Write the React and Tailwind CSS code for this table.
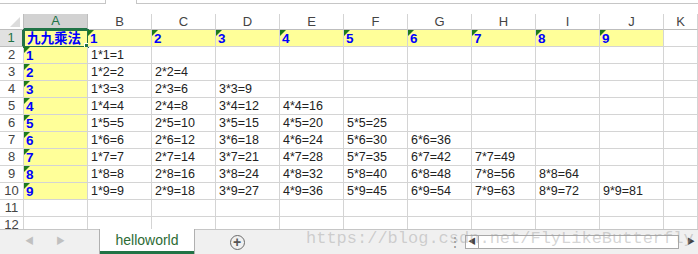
import React from "react";

const cols = ["A", "B", "C", "D", "E", "F", "G", "H", "I", "J", "K"];
const gridCols = "grid grid-cols-[24px_repeat(10,64px)_1fr]";

function Flag() {
  return (
    <span className="absolute left-0 top-0 w-0 h-0 border-t-[6px] border-r-[6px] border-t-[#1d7a1d] border-r-transparent" />
  );
}

function NumCell({ n, yellow = true }) {
  return (
    <div
      className={`relative h-[17px] border-r border-b border-[#d4d4d4] pl-[2px] flex items-end ${
        yellow ? "bg-[#ffff99]" : "bg-white"
      }`}
    >
      <Flag />
      <span className="text-[13.5px] leading-[15px] font-bold text-[#0000ff]">{n}</span>
    </div>
  );
}

function Cell({ text }) {
  return (
    <div className="h-[17px] border-r border-b border-[#d4d4d4] pl-[3px] flex items-end bg-white">
      <span className="text-[12.5px] leading-[15px] text-[#222]">{text}</span>
    </div>
  );
}

function RowHead({ n, active }) {
  return (
    <div
      className={`h-[17px] border-b flex items-center justify-center text-[13px] ${
        active
          ? "bg-[#e1e1e1] text-[#217346] border-[#bdbdbd] border-r-2 border-r-[#217346]"
          : "bg-white text-[#444] border-r border-[#d4d4d4]"
      }`}
    >
      {n}
    </div>
  );
}

export default function App() {
  const rows = [2, 3, 4, 5, 6, 7, 8, 9, 10];

  return (
    <div className="relative w-[698px] h-[254px] overflow-hidden bg-white font-['Liberation_Sans','Noto_Sans_CJK_SC',sans-serif]">
      <div className="h-[229px] overflow-hidden">
        {/* name box / formula bar */}
        <div className="h-[14px] flex items-start">
          <div className="w-[106px] h-[4px] border-r border-b border-[#c6c6c6]" />
          <div className="w-[30px]" />
          <div className="flex-1 h-[4px] border-l border-b border-[#c6c6c6]" />
        </div>

        {/* column headers */}
        <div className={gridCols}>
          <div className="relative h-[16px] border-r border-b border-[#bdbdbd] bg-white">
            <span className="absolute right-[3px] bottom-[2px] w-0 h-0 border-b-[10px] border-l-[10px] border-b-[#dcdcdc] border-l-transparent" />
          </div>
          {cols.map((c, i) => (
            <div
              key={c}
              className={`h-[16px] flex items-center justify-center text-[13px] ${
                i === 0
                  ? "bg-[#d2d2d2] text-[#217346] border-b-2 border-b-[#217346] border-r border-r-[#bdbdbd]"
                  : "bg-white text-[#444] border-r border-b border-r-[#d4d4d4] border-b-[#bdbdbd]"
              }`}
            >
              {c}
            </div>
          ))}
        </div>

        {/* row 1 */}
        <div className={gridCols}>
          <RowHead n={1} active />
          <div className="relative h-[17px] border-r border-b border-[#d4d4d4] bg-[#ffff99] pl-[3px] flex items-end">
            <span className="text-[13.5px] leading-[15px] font-bold text-[#0000ff]">九九乘法</span>
            <div className="absolute -left-[1px] -top-[1px] w-[66px] h-[19px] border-2 border-[#217346]" />
            <div className="absolute -right-[3px] -bottom-[3px] w-[6px] h-[6px] bg-[#217346] border border-white" />
          </div>
          {[1, 2, 3, 4, 5, 6, 7, 8, 9].map((n) => (
            <NumCell key={n} n={n} />
          ))}
          <Cell text="" />
        </div>

        {/* rows 2-10 */}
        {rows.map((r) => {
          const m = r - 1;
          return (
            <div key={r} className={gridCols}>
              <RowHead n={r} />
              <NumCell n={m} />
              {[1, 2, 3, 4, 5, 6, 7, 8, 9].map((c) => (
                <Cell key={c} text={c <= m ? `${c}*${m}=${c * m}` : ""} />
              ))}
              <Cell text="" />
            </div>
          );
        })}

        {/* rows 11-12 */}
        {[11, 12].map((r) => (
          <div key={r} className={gridCols}>
            <RowHead n={r} />
            {cols.map((c) => (
              <Cell key={c} text="" />
            ))}
          </div>
        ))}
      </div>

      {/* sheet tab bar */}
      <div className="h-[25px] border-t border-[#c6c6c6] bg-[#f0f0f0] flex items-stretch">
        <div className="w-[99px] flex items-center pl-[25px] gap-[22px] text-[9px] text-[#c0c0c0]">
          <span>◀</span>
          <span>▶</span>
        </div>
        <div className="relative w-[96px] -mt-px bg-white border-l border-r border-[#b0b0b0] flex items-center justify-center">
          <span className="text-[14px] text-[#2d6b35] pb-[3px]">helloworld</span>
          <span className="absolute left-0 right-0 bottom-0 h-[3px] bg-[#217346]" />
        </div>
        <div className="w-[84px] flex items-center justify-center">
          <span className="w-[15px] h-[15px] rounded-full border border-[#6a6a6a] flex items-center justify-center text-[#555] text-[14px] leading-none font-bold">
            +
          </span>
        </div>
        <div className="w-[170px]" />
        <div className="flex items-center w-[16px] text-[#8a8a8a] text-[12px]">⋮</div>
        <div className="flex items-center">
          <div className="w-[14px] h-[14px] border border-[#a8a8a8] bg-white flex items-center justify-center text-[8px] text-[#444]">
            ◀
          </div>
          <div className="w-[200px] h-[14px] bg-white border border-l-0 border-[#a8a8a8]" />
        </div>
        <div className="flex-1 flex items-center justify-end pr-[2px]">
          <div className="w-[10px] h-[14px] flex items-center justify-center text-[8px] text-[#444]">▶</div>
        </div>
      </div>

      {/* watermark */}
      <div className="absolute left-[306px] top-[226px] text-[17px] font-['Liberation_Mono',monospace] text-[#a0a0a0]/45 whitespace-nowrap pointer-events-none">
        https://blog.csdn.net/FlyLikeButterfly
      </div>
    </div>
  );
}
